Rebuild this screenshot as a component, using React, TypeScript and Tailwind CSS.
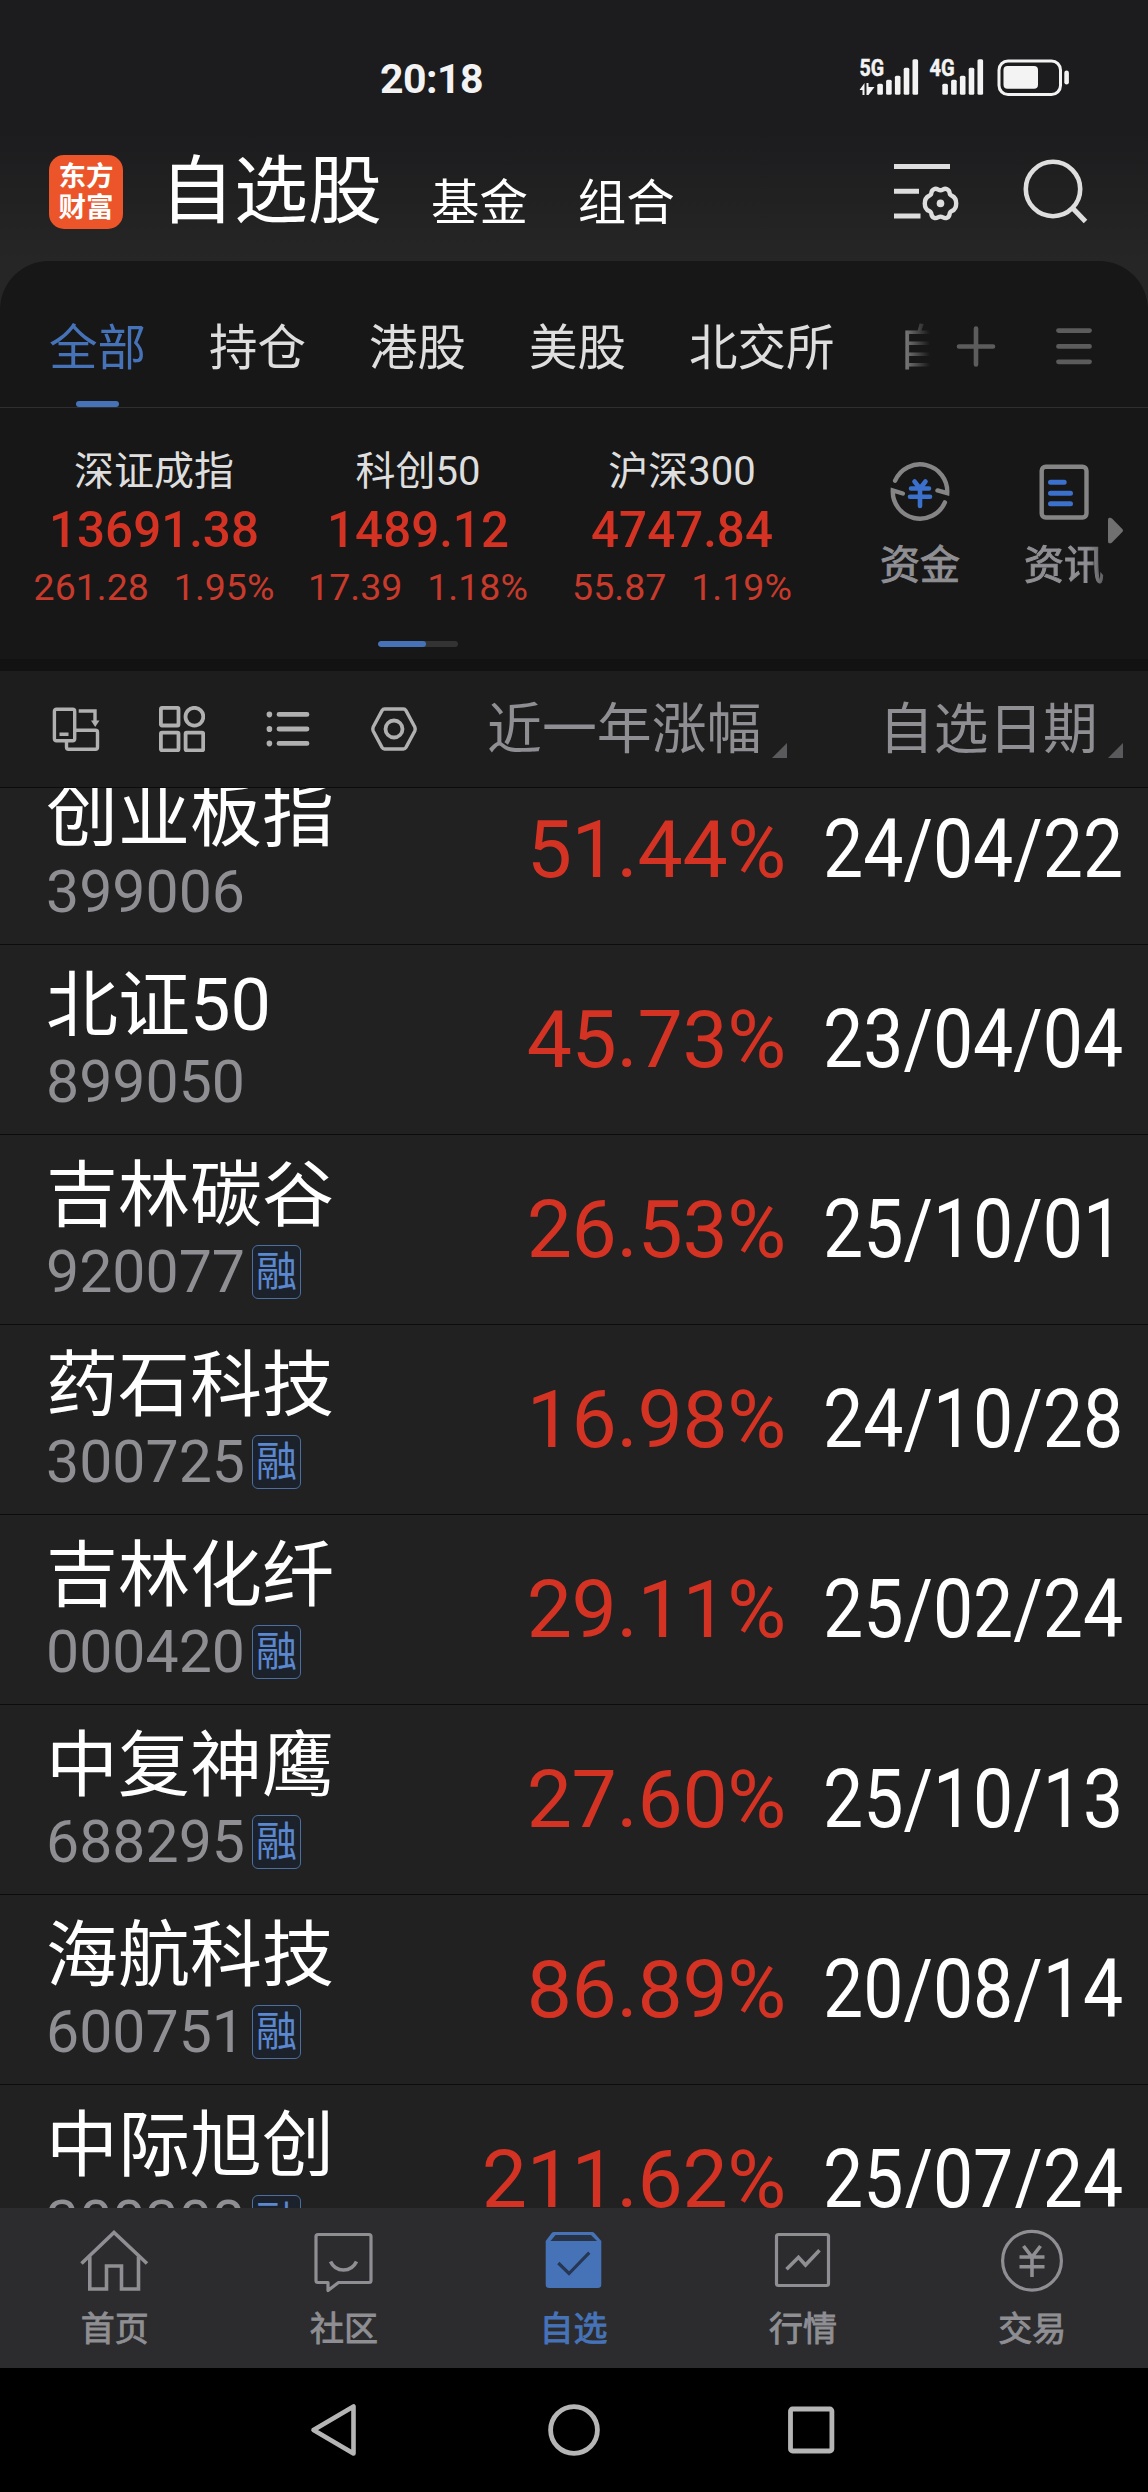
import type { ReactNode } from 'react';

interface Stock {
  name: string;
  code: string;
  margin?: boolean;
  change: string;
  date: string;
}

const stocks: Stock[] = [
  { name: '创业板指', code: '399006', change: '51.44%', date: '24/04/22' },
  { name: '北证50', code: '899050', change: '45.73%', date: '23/04/04' },
  { name: '吉林碳谷', code: '920077', margin: true, change: '26.53%', date: '25/10/01' },
  { name: '药石科技', code: '300725', margin: true, change: '16.98%', date: '24/10/28' },
  { name: '吉林化纤', code: '000420', margin: true, change: '29.11%', date: '25/02/24' },
  { name: '中复神鹰', code: '688295', margin: true, change: '27.60%', date: '25/10/13' },
  { name: '海航科技', code: '600751', margin: true, change: '86.89%', date: '20/08/14' },
  { name: '中际旭创', code: '300308', margin: true, change: '211.62%', date: '25/07/24' },
];

const indices = [
  { name: '深证成指', value: '13691.38', diff: '261.28', pct: '1.95%' },
  { name: '科创50', value: '1489.12', diff: '17.39', pct: '1.18%' },
  { name: '沪深300', value: '4747.84', diff: '55.87', pct: '1.19%' },
];

const groups = ['全部', '持仓', '港股', '美股', '北交所', '自选'];

function SignalBars() {
  return (
    <>
      <rect x="0" y="24.5" width="5.6" height="11" rx="1.5" />
      <rect x="8.8" y="20.5" width="5.6" height="15" rx="1.5" />
      <rect x="17.6" y="16.5" width="5.6" height="19" rx="1.5" />
      <rect x="26.4" y="8.5" width="5.6" height="27" rx="1.5" />
      <rect x="35.2" y="0" width="5.6" height="35.5" rx="1.5" />
    </>
  );
}

function StatusBar() {
  return (
    <div className="flex h-[130px] items-start pt-[59px] pl-[380px] text-[#f3f3f3]">
      <div className="w-[479px] text-[41px] leading-[40px] font-bold tracking-[-0.5px]">20:18</div>
      <svg className="overflow-visible" width="60" height="37" viewBox="0 0 60 37" fill="currentColor">
        <text x="0.4" y="17.4" fontSize="23.5" fontWeight="700" stroke="currentColor" strokeWidth="0.5" textLength="24.6" lengthAdjust="spacingAndGlyphs">
          5G
        </text>
        <path d="M0.5 31L5.5 24V36H3.5V31ZM7.5 24H9.5V28H15.5L9.5 36H7.5Z" />
        <g transform="translate(18.3 0.3)">
          <SignalBars />
        </g>
      </svg>
      <svg className="ml-[10px] overflow-visible" width="56" height="37" viewBox="0 0 56 37" fill="currentColor">
        <text x="0.4" y="17.4" fontSize="23.5" fontWeight="700" stroke="currentColor" strokeWidth="0.5" textLength="25.2" lengthAdjust="spacingAndGlyphs">
          4G
        </text>
        <g transform="translate(13.3 0.3)">
          <SignalBars />
        </g>
      </svg>
      <svg className="ml-[12px]" width="74" height="38" viewBox="0 0 74 38">
        <rect x="2" y="2" width="61.5" height="33.5" rx="9" fill="none" stroke="currentColor" strokeWidth="3" />
        <rect x="6.5" y="7" width="34.5" height="22.8" rx="4" fill="currentColor" />
        <rect x="67.3" y="11.5" width="4.6" height="14" rx="2.3" fill="currentColor" />
      </svg>
    </div>
  );
}

function Header() {
  return (
    <div className="flex h-[131px] items-center pb-[7px] pl-[49px]">
      <div className="flex h-[74px] w-[74px] flex-col items-center justify-center rounded-[15px] bg-[#ec5529] pb-[1px] text-[27.5px] leading-[31px] font-bold text-white">
        <span>东方</span>
        <span>财富</span>
      </div>
      <div className="ml-[37px] text-[74px] leading-[80px] text-white">自选股</div>
      <div className="mt-6 ml-[49px] text-[48.4px] leading-[56px] text-white">基金</div>
      <div className="mt-6 ml-[50px] text-[48.4px] leading-[56px] text-white">组合</div>
      <svg className="ml-[219px]" width="66" height="62" viewBox="0 0 66 62" fill="none" stroke="#dedede" strokeWidth="5">
        <path d="M0 5.5H56M0 30.3H25M0 55H26.5" />
        <path
          strokeWidth="4.4"
          strokeLinejoin="round"
          d="M46.5 29.2C49 29.2 50 26.8 53 28.2C56.5 29.8 55 32 56.2 33.6C57.4 35.3 62.2 34.6 62.2 42.4C62.2 50.2 57.4 49.5 56.2 51.2C55 52.8 56.5 55.2 53 56.8C50 58.2 49 55.6 46.5 55.6C44 55.6 43 58.2 40 56.8C36.5 55.2 38 52.8 36.8 51.2C35.6 49.5 30.8 50.2 30.8 42.4C30.8 34.6 35.6 35.3 36.8 33.6C38 32 36.5 29.8 40 28.2C43 26.8 44 29.2 46.5 29.2Z"
        />
        <circle cx="46.5" cy="42.4" r="3.8" fill="#dedede" stroke="none" />
      </svg>
      <svg className="ml-[62px]" width="66" height="66" viewBox="0 0 66 66" fill="none" stroke="#dedede" strokeWidth="4.6">
        <circle cx="31" cy="30" r="27.2" />
        <path d="M51 49.5L63.5 62.5" strokeWidth="5" />
      </svg>
    </div>
  );
}

function GroupTabs() {
  return (
    <div className="flex h-[147px] border-b border-[#2f2f2f]">
      <div className="flex w-[930px] shrink-0 gap-[63px] overflow-hidden [mask-image:linear-gradient(to_right,#000_880px,transparent_930px)] pl-[49px] text-[48.5px] text-[#dedede]">
        {groups.map((group, i) => (
          <div key={group} className={i === 0 ? 'shrink-0 text-[#4673b8]' : 'shrink-0'}>
            <div className="pt-[60px] leading-[56px]">{group}</div>
            {i === 0 && <div className="mx-auto mt-[24px] h-[6px] w-[43px] rounded-full bg-[#4673b8]" />}
          </div>
        ))}
      </div>
      <svg className="mt-[64px] ml-[25px]" width="42" height="44" viewBox="0 0 42 44" stroke="#5c5c5c" strokeWidth="4.6" strokeLinecap="round">
        <path d="M21 3.5V39.5M4 21.5H38" />
      </svg>
      <svg className="mt-[64px] ml-[57px]" width="40" height="44" viewBox="0 0 40 44" stroke="#5c5c5c" strokeWidth="4.8" strokeLinecap="round">
        <path d="M4.5 5.6H35.5M4.5 21.4H35.5M4.5 36.8H35.5" />
      </svg>
    </div>
  );
}

function FundIcon() {
  return (
    <svg width="60" height="60" viewBox="0 0 60 60" fill="none" strokeLinecap="round">
      <g stroke="#858585" strokeWidth="4.4">
        <path d="M5.1 18.7A27.2 27.2 0 0 1 57.2 31.2L47.5 28.4" />
        <path d="M54.9 40.4A27.2 27.2 0 0 1 2.8 28.4L12.8 31.5" />
      </g>
      <path d="M24.5 19.5L30 26.5L35.5 19.5M21 26.5H39M20 34.8H40M30 26.5V44" stroke="#3b70cc" strokeWidth="4.6" />
    </svg>
  );
}

function NewsIcon() {
  return (
    <svg width="50" height="60" viewBox="0 0 50 60" fill="none" strokeLinecap="round">
      <rect x="2.7" y="4.7" width="44.8" height="50.8" rx="4" stroke="#858585" strokeWidth="4.4" />
      <path d="M11.5 20.2H25.2M11.5 31.2H31.5M11.5 41.8H31.5" stroke="#3b70cc" strokeWidth="5" />
    </svg>
  );
}

function IndexPanel() {
  return (
    <div className="flex h-[251px]">
      <div className="ml-[22px] w-[792px] shrink-0">
        <div className="grid grid-cols-3 pt-[40px] text-center">
          {indices.map((item) => (
            <div key={item.name}>
              <div className="text-[40px] leading-[48px] text-[#dedede]">{item.name}</div>
              <div className="mt-[4px] text-[49.3px] leading-[60px] font-medium text-[#d43324]">{item.value}</div>
              <div className="mt-[3px] flex justify-center gap-[25px] text-[37.5px] leading-[48px] text-[#c73a2c]">
                <span>{item.diff}</span>
                <span>{item.pct}</span>
              </div>
            </div>
          ))}
        </div>
        <div className="mx-auto mt-[30px] h-[6px] w-[80px] overflow-hidden rounded-full bg-[#333]">
          <div className="h-full w-[48px] rounded-full bg-[#4673b8]" />
        </div>
      </div>
      <div className="ml-[66px] flex w-[80px] shrink-0 flex-col items-center pt-[54px] text-[40px] leading-[48px] text-[#8e8e93] [-webkit-text-stroke:1px]">
        <FundIcon />
        <div className="mt-[20px]">资金</div>
      </div>
      <div className="ml-[64px] flex w-[80px] shrink-0 flex-col items-center [mask-image:linear-gradient(to_right,#000_64px,rgba(0,0,0,0.6)_80px)] pt-[54px] text-[40px] leading-[48px] text-[#8e8e93] [-webkit-text-stroke:1px]">
        <NewsIcon />
        <div className="mt-[20px]">资讯</div>
      </div>
      <svg className="mt-[109px] ml-[4px]" width="16" height="27" viewBox="0 0 16 27" fill="#707070">
        <path d="M0 2.5C0 0.5 2.5 0 4 1.5L14.3 12C15.2 13 15.2 14 14.3 15L4 25.5C2.5 27 0 26.5 0 24.5Z" />
      </svg>
    </div>
  );
}

function SortCorner() {
  return (
    <svg width="15" height="15" viewBox="0 0 15 15" fill="#5a5a5c">
      <path d="M15 0V15H0Z" />
    </svg>
  );
}

function FilterBar() {
  return (
    <div className="flex h-[117px] items-start border-b border-[#0c0c0c] bg-[#1d1d1d] text-[#b0b0b0]">
      <svg className="mt-[35px] ml-[52px]" width="48" height="46" viewBox="0 0 48 46" fill="none" stroke="currentColor" strokeWidth="3.4">
        <rect x="2.4" y="3.2" width="20.3" height="31.6" rx="2" />
        <path d="M7.5 28.3H16.5M26.7 5H43V16M24 24.2H43.5Q45.5 24.2 45.5 26.2V41.2Q45.5 43.2 43.5 43.2H16.5Q14.5 43.2 14.5 41.2V35" />
        <path d="M39 14.5H47.5L43.2 21Z" fill="currentColor" stroke="none" />
      </svg>
      <svg className="mt-[35px] ml-[59px]" width="46" height="46" viewBox="0 0 46 46" fill="none" stroke="currentColor" strokeWidth="3.8">
        <rect x="1.9" y="1.9" width="17.6" height="17.6" rx="1" />
        <circle cx="35.4" cy="10.7" r="8.9" />
        <rect x="1.9" y="26.7" width="17.6" height="17.6" rx="1" />
        <rect x="26.6" y="26.7" width="17.6" height="17.6" rx="1" />
      </svg>
      <svg className="mt-[38px] ml-[61px]" width="44" height="40" viewBox="0 0 44 40" stroke="currentColor" strokeWidth="4.8" strokeLinecap="round">
        <path d="M13 5.4H41M13 20H41M13 34.4H41" />
        <path d="M3.4 5.2V5.6M3.4 19.8V20.2M3.4 34.2V34.6" strokeWidth="5.6" />
      </svg>
      <svg className="mt-[35px] ml-[60px]" width="48" height="46" viewBox="0 0 48 46" fill="none" stroke="currentColor" strokeWidth="3.4">
        <path strokeLinejoin="round" d="M14.5 3H33.5Q35 3 36 4.6L44.8 21Q45.6 23 44.8 25L36 41.4Q35 43 33.5 43H14.5Q13 43 12 41.4L3.2 25Q2.4 23 3.2 21L12 4.6Q13 3 14.5 3Z" />
        <circle cx="24" cy="23" r="8.5" strokeWidth="3.8" />
      </svg>
      <div className="mt-[28px] ml-[69px] flex w-[300px] items-end justify-between text-[54.9px] leading-[60px] text-[#8e8e93]">
        近一年涨幅
        <div className="pb-[1px]">
          <SortCorner />
        </div>
      </div>
      <div className="mt-[28px] ml-[92px] flex w-[244px] items-end justify-between text-[54.7px] leading-[60px] text-[#8e8e93]">
        自选日期
        <div className="pb-[1px]">
          <SortCorner />
        </div>
      </div>
    </div>
  );
}

function StockRow({ stock }: { stock: Stock }) {
  return (
    <div className="flex h-[190px] shrink-0 border-t border-[#0c0c0c] pl-[46px]">
      <div className="w-[340px] pt-[21px]">
        <div className="text-[72px] leading-[80px] text-white">{stock.name}</div>
        <div className="mt-[6px] flex h-[60px] items-center text-[59px] leading-[60px] text-[#8e8e93]">
          {stock.code}
          {stock.margin && (
            <span className="ml-[7px] flex h-[54px] w-[49px] items-center justify-center rounded-[6px] border border-[#4c6f9f] bg-[#1b222c] text-[41px] leading-[50px] text-[#5b88cf]">
              融
            </span>
          )}
        </div>
      </div>
      <div className="w-[400px] pt-[45px] text-right text-[80.5px] leading-[100px] tracking-[-0.3px] text-[#d43324]">
        {stock.change}
      </div>
      <div className="ml-[37px] w-[300px] origin-left scale-x-[0.883] pt-[45px] text-[81px] leading-[100px] whitespace-nowrap text-white">
        {stock.date}
      </div>
    </div>
  );
}

function BottomTab({ label, active, children }: { label: string; active?: boolean; children: ReactNode }) {
  return (
    <div className={active ? 'flex flex-1 flex-col items-center text-[#4673b8]' : 'flex flex-1 flex-col items-center text-[#8e8e93]'}>
      <svg className="mt-[20px]" width="70" height="66" viewBox="0 0 70 66" fill="none" stroke="currentColor" strokeWidth="3.2">
        {children}
      </svg>
      <div className="mt-[13px] text-[34px] leading-[44px] [-webkit-text-stroke:0.9px]">{label}</div>
    </div>
  );
}

function BottomTabs() {
  return (
    <div className="flex h-[160px] bg-[#2c2c2e] pr-[1px]">
      <BottomTab label="首页">
        <path d="M1.5 35.5L34 4.5L67 35.5" strokeWidth="3.6" />
        <path d="M9.8 28.5V61H26.5V38H41.5V61H58.5V28.5" strokeWidth="3.6" />
      </BottomTab>
      <BottomTab label="社区">
        <path
          strokeLinejoin="round"
          d="M9 6.5H60Q62 6.5 62 8.5V52.5Q62 54.5 60 54.5H29.5L19 62.5V54.5H9Q7 54.5 7 52.5V8.5Q7 6.5 9 6.5Z"
        />
        <path d="M21.5 33.5Q25.5 42 34.5 42Q43.5 42 47.5 33.5" strokeWidth="3.6" />
      </BottomTab>
      <BottomTab label="自选" active>
        <path d="M15 4H53Q54.5 4 55.5 5.2L62.3 13V56.5Q62.3 60 59 60H10Q6.7 60 6.7 56.5V13L12.5 5.2Q13.5 4 15 4Z" fill="currentColor" stroke="none" />
        <path d="M16.5 7H52L58 13H11.5Z" fill="#283445" stroke="none" />
        <path d="M19.3 35L30 45.5L50.3 24.7" stroke="#263754" strokeWidth="3.2" />
      </BottomTab>
      <BottomTab label="行情">
        <rect x="8.5" y="6.5" width="52" height="51" rx="2" />
        <path d="M18.5 41.3L30.5 29.3L37.5 37L51.5 22.3" strokeWidth="3.6" />
      </BottomTab>
      <BottomTab label="交易">
        <circle cx="35" cy="32.7" r="29.4" />
        <path d="M26.5 18L35 29L43.5 18M22.5 29H47.5M22.5 38.7H47.5M35 29V49" strokeWidth="3.6" />
      </BottomTab>
    </div>
  );
}

function SystemNav() {
  return (
    <div className="flex h-[124px] items-center justify-center gap-[184px] bg-black">
      <svg width="54" height="54" viewBox="0 0 54 54" fill="none" stroke="#b5b5b5" strokeWidth="4.6" strokeLinejoin="round">
        <path d="M44.5 3.5V50.5L4.5 27Z" />
      </svg>
      <svg width="54" height="54" viewBox="0 0 54 54" fill="none" stroke="#b5b5b5" strokeWidth="4.8">
        <circle cx="27" cy="27" r="23.4" />
      </svg>
      <svg width="54" height="54" viewBox="0 0 54 54" fill="none" stroke="#b5b5b5" strokeWidth="4.8">
        <rect x="5.5" y="6" width="41.4" height="42" rx="2" />
      </svg>
    </div>
  );
}

export default function App() {
  return (
    <div className="h-[2492px] w-[1148px] overflow-hidden bg-[#262626] font-[Roboto,'Noto_Sans_CJK_SC',sans-serif]">
      <div className="bg-linear-to-b from-[#1c1c1e] from-50% to-[#262626]">
        <StatusBar />
        <Header />
      </div>
      <div className="h-[398px] rounded-t-[49px] bg-[#171717]">
        <GroupTabs />
        <IndexPanel />
      </div>
      <div className="h-[12px] bg-[#121212]" />
      <FilterBar />
      {/* list is scrolled part-way, so the first and last rows are cut off */}
      <div className="flex h-[1420px] flex-col overflow-hidden bg-[#212121]">
        <div className="-mt-[34px]">
          {stocks.map((stock) => (
            <StockRow key={stock.code} stock={stock} />
          ))}
        </div>
      </div>
      <BottomTabs />
      <SystemNav />
    </div>
  );
}
